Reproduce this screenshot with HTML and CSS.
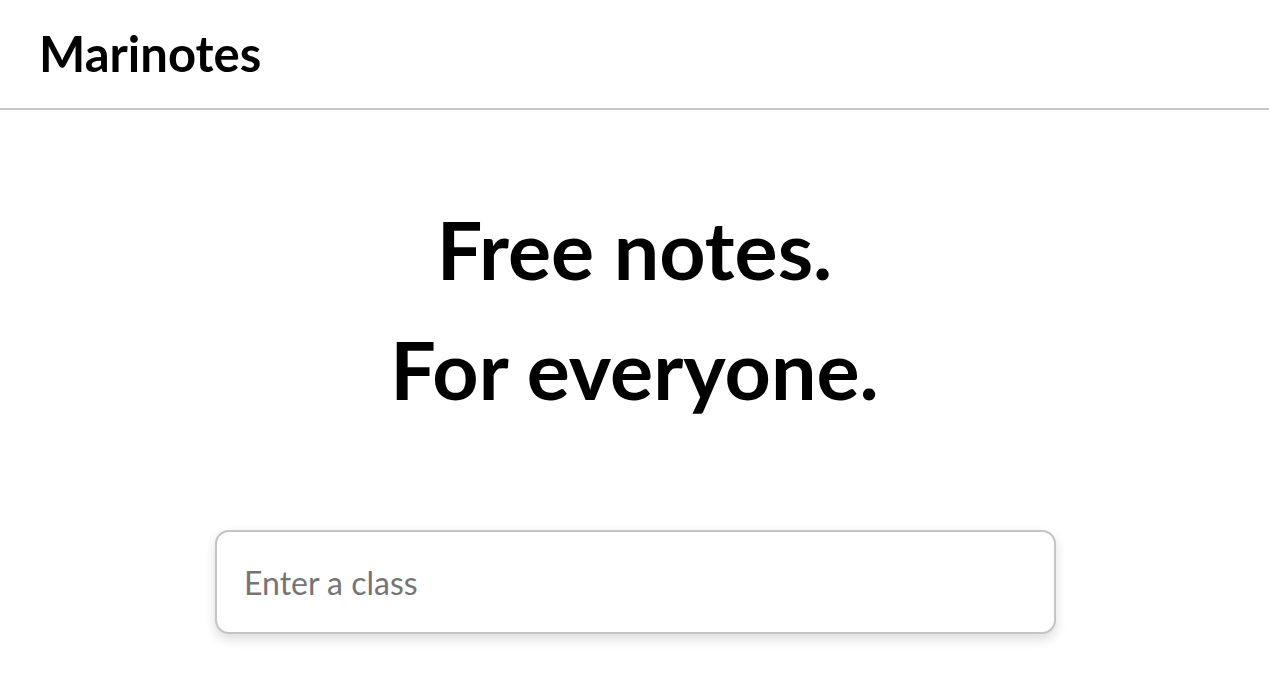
FILE: index.html
```html
<!DOCTYPE html>
<html lang="en">
<head>
<meta charset="utf-8">
<title>Marinotes</title>
<link rel="stylesheet" href="styles.css">
</head>
<body>
<header class="topbar">
  <div class="brand">Marinotes</div>
</header>
<main class="hero">
  <h1 class="headline">Free notes.<br>For everyone.</h1>
  <div class="search">
    <input class="search-input" type="text" placeholder="Enter a class">
  </div>
</main>
</body>
</html>
```
FILE: styles.css
```css
* { box-sizing: border-box; }
html, body {
  margin: 0;
  padding: 0;
  background: #ffffff;
  font-family: Lato, "Open Sans", sans-serif;
  color: #000;
}
.topbar {
  padding: 24px 39px;
  border-bottom: 2px solid #c8c8c8;
  height: 110px;
}
.brand {
  font-size: 49px;
  font-weight: 700;
  line-height: 58px;
  color: #000;
}
.hero {
  display: flex;
  flex-direction: column;
  align-items: center;
  padding-top: 79px;
  padding-bottom: 40px;
}
.headline {
  margin: 0;
  font-size: 80.7px;
  font-weight: 700;
  line-height: 120px;
  text-align: center;
}
.search {
  margin-top: 101px;
  width: 841px;
  margin-left: 2px;
}
.search-input {
  display: block;
  width: 100%;
  height: 104px;
  border: 2px solid #c2c4c7;
  border-radius: 14px;
  padding: 0 27px;
  font-family: Lato, "Open Sans", sans-serif;
  font-size: 32px;
  color: #333;
  outline: none;
  background: #fff;
  box-shadow: 0 5px 12px rgba(0, 0, 0, 0.14);
}
.search-input::placeholder {
  color: #757575;
}
```
